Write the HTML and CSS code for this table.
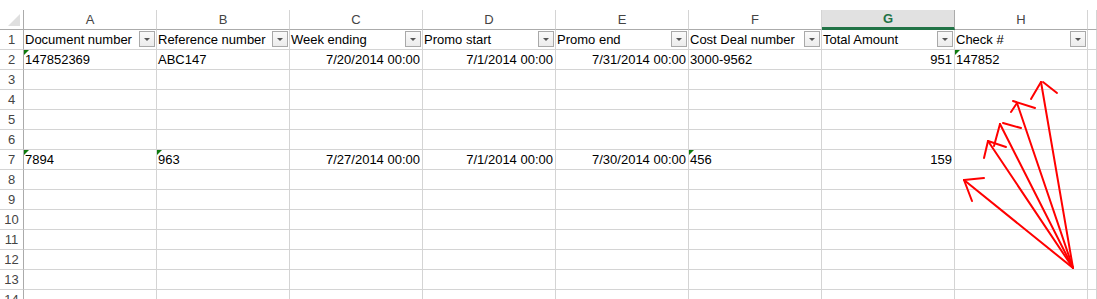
FILE: index.html
```html
<!DOCTYPE html>
<html>
<head>
<meta charset="utf-8">
<link rel="stylesheet" href="styles.css">
</head>
<body>
<div class="sheet">
  <div class="corner"><span class="corner-tri"></span></div>
  <div class="colh">A</div><div class="colh">B</div><div class="colh">C</div><div class="colh">D</div><div class="colh">E</div><div class="colh">F</div><div class="colh sel">G</div><div class="colh">H</div><div class="colh"></div>

  <div class="rowh">1</div>
  <div class="cell hd"><span>Document number</span><i class="fb"></i></div>
  <div class="cell hd"><span>Reference number</span><i class="fb"></i></div>
  <div class="cell hd"><span>Week ending</span><i class="fb"></i></div>
  <div class="cell hd"><span>Promo start</span><i class="fb"></i></div>
  <div class="cell hd"><span>Promo end</span><i class="fb"></i></div>
  <div class="cell hd"><span>Cost Deal number</span><i class="fb"></i></div>
  <div class="cell hd"><span>Total Amount</span><i class="fb"></i></div>
  <div class="cell hd"><span>Check #</span><i class="fb"></i></div>
  <div class="cell"></div>

  <div class="rowh">2</div>
  <div class="cell tx">147852369</div>
  <div class="cell">ABC147</div>
  <div class="cell num">7/20/2014 00:00</div>
  <div class="cell num">7/1/2014 00:00</div>
  <div class="cell num">7/31/2014 00:00</div>
  <div class="cell">3000-9562</div>
  <div class="cell num">951</div>
  <div class="cell tx">147852</div>
  <div class="cell"></div>

  <div class="rowh">3</div><div class="cell"></div><div class="cell"></div><div class="cell"></div><div class="cell"></div><div class="cell"></div><div class="cell"></div><div class="cell"></div><div class="cell"></div><div class="cell"></div>
  <div class="rowh">4</div><div class="cell"></div><div class="cell"></div><div class="cell"></div><div class="cell"></div><div class="cell"></div><div class="cell"></div><div class="cell"></div><div class="cell"></div><div class="cell"></div>
  <div class="rowh">5</div><div class="cell"></div><div class="cell"></div><div class="cell"></div><div class="cell"></div><div class="cell"></div><div class="cell"></div><div class="cell"></div><div class="cell"></div><div class="cell"></div>
  <div class="rowh">6</div><div class="cell"></div><div class="cell"></div><div class="cell"></div><div class="cell"></div><div class="cell"></div><div class="cell"></div><div class="cell"></div><div class="cell"></div><div class="cell"></div>

  <div class="rowh">7</div>
  <div class="cell tx">7894</div>
  <div class="cell tx">963</div>
  <div class="cell num">7/27/2014 00:00</div>
  <div class="cell num">7/1/2014 00:00</div>
  <div class="cell num">7/30/2014 00:00</div>
  <div class="cell tx">456</div>
  <div class="cell num">159</div>
  <div class="cell"></div>
  <div class="cell"></div>

  <div class="rowh">8</div><div class="cell"></div><div class="cell"></div><div class="cell"></div><div class="cell"></div><div class="cell"></div><div class="cell"></div><div class="cell"></div><div class="cell"></div><div class="cell"></div>
  <div class="rowh">9</div><div class="cell"></div><div class="cell"></div><div class="cell"></div><div class="cell"></div><div class="cell"></div><div class="cell"></div><div class="cell"></div><div class="cell"></div><div class="cell"></div>
  <div class="rowh">10</div><div class="cell"></div><div class="cell"></div><div class="cell"></div><div class="cell"></div><div class="cell"></div><div class="cell"></div><div class="cell"></div><div class="cell"></div><div class="cell"></div>
  <div class="rowh">11</div><div class="cell"></div><div class="cell"></div><div class="cell"></div><div class="cell"></div><div class="cell"></div><div class="cell"></div><div class="cell"></div><div class="cell"></div><div class="cell"></div>
  <div class="rowh">12</div><div class="cell"></div><div class="cell"></div><div class="cell"></div><div class="cell"></div><div class="cell"></div><div class="cell"></div><div class="cell"></div><div class="cell"></div><div class="cell"></div>
  <div class="rowh">13</div><div class="cell"></div><div class="cell"></div><div class="cell"></div><div class="cell"></div><div class="cell"></div><div class="cell"></div><div class="cell"></div><div class="cell"></div><div class="cell"></div>
  <div class="rowh">14</div><div class="cell"></div><div class="cell"></div><div class="cell"></div><div class="cell"></div><div class="cell"></div><div class="cell"></div><div class="cell"></div><div class="cell"></div><div class="cell"></div>
</div>

<svg class="arrows" width="1097" height="299" viewBox="0 0 1097 299">
  <g stroke="#ff0000" stroke-width="2" fill="none" stroke-linecap="round">
    <line x1="1073" y1="268" x2="1041" y2="82"/>
    <line x1="1041" y1="82" x2="1031" y2="99"/>
    <line x1="1043" y1="82" x2="1057" y2="93"/>

    <line x1="1073" y1="268" x2="1017" y2="103"/>
    <line x1="1017" y1="103" x2="1011" y2="112"/>
    <line x1="1013" y1="101" x2="1035" y2="108"/>

    <line x1="1073" y1="268" x2="1000" y2="124"/>
    <line x1="1000" y1="124" x2="994" y2="146"/>
    <line x1="1003" y1="123" x2="1021" y2="128"/>

    <line x1="1073" y1="268" x2="988" y2="141"/>
    <line x1="988" y1="141" x2="984" y2="158"/>
    <line x1="988" y1="141" x2="1006" y2="147"/>

    <line x1="1073" y1="268" x2="964" y2="180"/>
    <line x1="964" y1="180" x2="984" y2="178"/>
    <line x1="964" y1="180" x2="972" y2="201"/>
  </g>
</svg>
</body>
</html>
```
FILE: styles.css
```css
html, body {
  margin: 0;
  padding: 0;
  background: #ffffff;
  overflow: hidden;
}

body {
  position: relative;
  width: 1097px;
  height: 299px;
  font-family: "Liberation Sans", Arial, sans-serif;
  font-size: 13px;
  color: #000;
}

.sheet {
  display: grid;
  grid-template-columns: 24px repeat(8, 133px) 1fr;
  grid-auto-rows: 20px;
  margin-top: 10px;
}

.corner {
  position: relative;
  border-right: 1px solid #ababab;
  border-bottom: 1px solid #ababab;
  background: #ffffff;
}

.corner-tri {
  position: absolute;
  right: 3px;
  bottom: 3px;
  width: 0;
  height: 0;
  border-left: 12px solid transparent;
  border-bottom: 12px solid #dfdfdf;
}

.colh {
  border-right: 1px solid #d4d4d4;
  border-bottom: 1px solid #ababab;
  text-align: center;
  line-height: 19px;
  color: #444;
  background: #ffffff;
}

.colh.sel {
  background: #e1e1e1;
  color: #217346;
  font-weight: bold;
  border-bottom: 3px solid #217346;
  line-height: 17px;
  border-right-color: #ababab;
}

.rowh {
  border-right: 1px solid #ababab;
  border-bottom: 1px solid #d4d4d4;
  text-align: center;
  line-height: 20px;
  color: #444;
  font-size: 13px;
}

.cell {
  position: relative;
  border-right: 1px solid #d4d4d4;
  border-bottom: 1px solid #d4d4d4;
  line-height: 19px;
  padding: 0 2px 0 1px;
  white-space: nowrap;
  overflow: hidden;
}

.cell.num {
  text-align: right;
}

.cell.hd {
  display: flex;
  align-items: center;
  justify-content: space-between;
  padding-right: 1px;
}

.cell.tx::before {
  content: "";
  position: absolute;
  left: 0;
  top: 0;
  width: 0;
  height: 0;
  border-top: 5px solid #0e7a0d;
  border-right: 5px solid transparent;
}

.fb {
  position: relative;
  width: 14px;
  height: 14px;
  border: 1px solid #a9a9a9;
  background: linear-gradient(#fafafa, #ececec);
  flex: none;
  margin-bottom: 1px;
}

.fb::after {
  content: "";
  position: absolute;
  left: 4px;
  top: 6px;
  width: 0;
  height: 0;
  border-left: 3px solid transparent;
  border-right: 3px solid transparent;
  border-top: 3px solid #555;
}

.arrows {
  position: absolute;
  left: 0;
  top: 0;
  pointer-events: none;
}
```
